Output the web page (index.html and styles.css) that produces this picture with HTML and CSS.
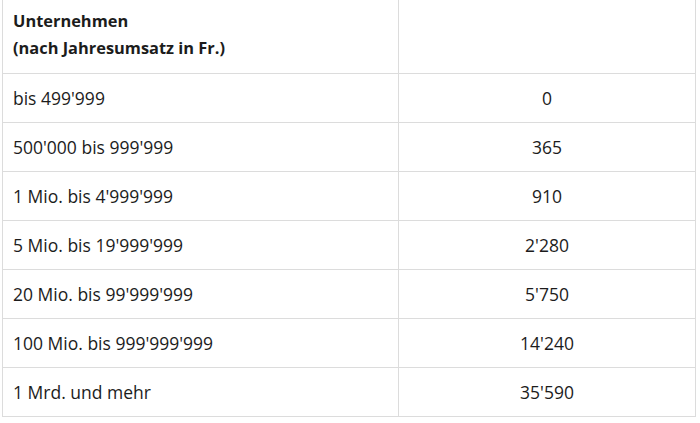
FILE: index.html
```html
<!DOCTYPE html>
<html lang="de">
<head>
<meta charset="utf-8">
<link rel="stylesheet" href="styles.css">
</head>
<body>
<table class="fees">
  <colgroup><col class="c1"><col class="c2"></colgroup>
  <thead>
    <tr><th class="head">Unternehmen<br>(nach Jahresumsatz in Fr.)</th><th class="head"></th></tr>
  </thead>
  <tbody>
    <tr><td>bis 499'999</td><td class="num">0</td></tr>
    <tr><td>500'000 bis 999'999</td><td class="num">365</td></tr>
    <tr><td>1 Mio. bis 4'999'999</td><td class="num">910</td></tr>
    <tr><td>5 Mio. bis 19'999'999</td><td class="num">2'280</td></tr>
    <tr><td>20 Mio. bis 99'999'999</td><td class="num">5'750</td></tr>
    <tr><td>100 Mio. bis 999'999'999</td><td class="num">14'240</td></tr>
    <tr><td>1 Mrd. und mehr</td><td class="num">35'590</td></tr>
  </tbody>
</table>
</body>
</html>
```
FILE: styles.css
```css
html, body { margin: 0; padding: 0; background: #fff; }
body { font-family: "Open Sans", "Noto Sans", sans-serif; color: #1c1c1c; font-size: 17.5px; }
.fees {
  border-collapse: collapse;
  margin: -1px 0 0 2px;
  width: 693px;
  table-layout: fixed;
}
.c1 { width: 396px; }
.c2 { width: 297px; }
.fees th, .fees td {
  border: 1px solid #dcdcdc;
  padding: 0 10px;
  vertical-align: middle;
}
.fees th {
  height: 74px;
  text-align: left;
  font-weight: 700;
  font-size: 16.4px;
  line-height: 27px;
  padding-bottom: 5px;
  box-sizing: border-box;
}
.fees td { height: 48px; line-height: 22px; }
.fees td.num { text-align: center; }
```
